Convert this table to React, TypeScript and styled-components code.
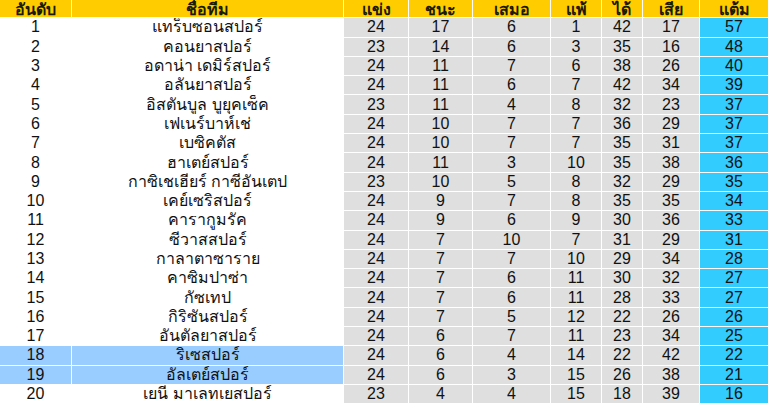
import React from "react";
import styled, { createGlobalStyle } from "styled-components";

const Global = createGlobalStyle`
  html, body { margin: 0; padding: 0; background: #ffffff; }
  body { font-family: "Liberation Sans", Arial, "Noto Sans", sans-serif; }
`;

const Table = styled.div`
  display: grid;
  grid-template-columns: 71px 271px 64px 63px 77px 50px 40px 56px 68px;
  grid-template-rows: 17.3px;
  grid-auto-rows: 18.3px;
  column-gap: 1px;
  row-gap: 1px;
  width: 768px;
  background: #ffffff;
`;

type Tone = "head" | "plain" | "stat" | "points" | "zone";

const colors: Record<Tone, string> = {
  head: "#ffcc00",
  plain: "#ffffff",
  stat: "#dfdfdf",
  points: "#33ccff",
  zone: "#99ccff",
};

const Cell = styled.div<{ $tone: Tone }>`
  background: ${(p) => colors[p.$tone]};
  display: flex;
  align-items: center;
  justify-content: center;
  font-size: 16px;
  font-weight: ${(p) => (p.$tone === "head" ? 700 : 400)};
  color: ${(p) => (p.$tone === "head" ? "#1a1a00" : "#111111")};
  line-height: 1;
  padding-top: ${(p) => (p.$tone === "head" ? "2px" : "0")};
  white-space: nowrap;
  overflow: hidden;
`;

const headers = ["อันดับ", "ชื่อทีม", "แข่ง", "ชนะ", "เสมอ", "แพ้", "ได้", "เสีย", "แต้ม"];

const rows: [number, string, number, number, number, number, number, number, number][] = [
  [1, "แทร็บซอนสปอร์", 24, 17, 6, 1, 42, 17, 57],
  [2, "คอนยาสปอร์", 23, 14, 6, 3, 35, 16, 48],
  [3, "อดาน่า เดมิร์สปอร์", 24, 11, 7, 6, 38, 26, 40],
  [4, "อลันยาสปอร์", 24, 11, 6, 7, 42, 34, 39],
  [5, "อิสตันบูล บูยุคเซ็ค", 23, 11, 4, 8, 32, 23, 37],
  [6, "เฟเนร์บาห์เช่", 24, 10, 7, 7, 36, 29, 37],
  [7, "เบซิคตัส", 24, 10, 7, 7, 35, 31, 37],
  [8, "ฮาเตย์สปอร์", 24, 11, 3, 10, 35, 38, 36],
  [9, "กาซิเชเฮียร์ กาซีอันเตป", 23, 10, 5, 8, 32, 29, 35],
  [10, "เคย์เซริสปอร์", 24, 9, 7, 8, 35, 35, 34],
  [11, "คารากูมรัค", 24, 9, 6, 9, 30, 36, 33],
  [12, "ซีวาสสปอร์", 24, 7, 10, 7, 31, 29, 31],
  [13, "กาลาตาซาราย", 24, 7, 7, 10, 29, 34, 28],
  [14, "คาซิมปาซ่า", 24, 7, 6, 11, 30, 32, 27],
  [15, "กัซเทป", 24, 7, 6, 11, 28, 33, 27],
  [16, "กิริซันสปอร์", 24, 7, 5, 12, 22, 26, 26],
  [17, "อันตัลยาสปอร์", 24, 6, 7, 11, 23, 34, 25],
  [18, "ริเซสปอร์", 24, 6, 4, 14, 22, 42, 22],
  [19, "อัลเตย์สปอร์", 24, 6, 3, 15, 26, 38, 21],
  [20, "เยนี มาเลทเยสปอร์", 23, 4, 4, 15, 18, 39, 16],
];

const zoneRows = new Set([18, 19]);

export default function App() {
  return (
    <>
      <Global />
      <Table>
        {headers.map((h) => (
          <Cell key={h} $tone="head">
            {h}
          </Cell>
        ))}
        {rows.map((r) =>
          r.map((v, i) => {
            let tone: Tone;
            if (i < 2) tone = zoneRows.has(r[0]) ? "zone" : "plain";
            else if (i === 8) tone = "points";
            else tone = "stat";
            return (
              <Cell key={`${r[0]}-${i}`} $tone={tone}>
                {v}
              </Cell>
            );
          })
        )}
      </Table>
    </>
  );
}
